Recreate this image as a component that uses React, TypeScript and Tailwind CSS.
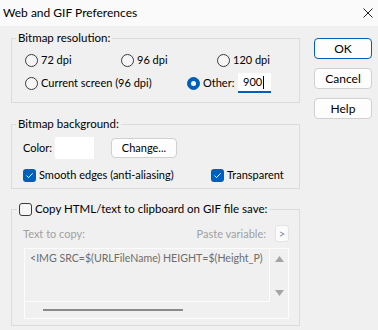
import React from "react";

function Radio({ checked }: { checked?: boolean }) {
  return (
    <span
      className={`w-[13px] h-[13px] shrink-0 rounded-full border flex items-center justify-center ${
        checked ? "bg-[#005fb8] border-[#005fb8]" : "border-[#3a3a3a] bg-[#f6f6f6]"
      }`}
    >
      {checked && <span className="w-[5px] h-[5px] rounded-full bg-white" />}
    </span>
  );
}

function Check({ checked }: { checked?: boolean }) {
  if (!checked)
    return <span className="w-[13px] h-[13px] shrink-0 rounded-[3px] border border-[#3a3a3a] bg-[#f6f6f6]" />;
  return (
    <span className="w-[13px] h-[13px] shrink-0 rounded-[3px] bg-[#005fb8] flex items-center justify-center">
      <svg width="9" height="9" viewBox="0 0 9 9">
        <path d="M1.5 4.6 L3.5 6.6 L7.6 2.3" stroke="white" strokeWidth="1" fill="none" />
      </svg>
    </span>
  );
}

function Btn({ label, def }: { label: string; def?: boolean }) {
  return (
    <div
      className={`w-[58px] h-[21px] rounded-[4px] bg-[#fdfdfd] border flex items-center justify-center text-[12px] ${
        def ? "border-[#005fb8]" : "border-[#d0d0d0]"
      }`}
    >
      {label}
    </div>
  );
}

export default function App() {
  return (
    <div className="w-[378px] h-[330px] overflow-hidden bg-[#f0f0f0] text-black font-['Lato',sans-serif] text-[11px] leading-[16px]">
      <div className="h-[26px] bg-[#fafafa] flex items-center justify-between pl-[3px] pr-[5px]">
        <span className="text-[12px]">Web and GIF Preferences</span>
        <svg width="10" height="10" viewBox="0 0 10 10">
          <path d="M0.5 0.5 L9.5 9.5 M9.5 0.5 L0.5 9.5" stroke="#222" strokeWidth="1" />
        </svg>
      </div>
      <div className="flex pl-[11px] pt-[4px]">
        <div className="w-[289px] flex flex-col">
          <fieldset className="border border-[#dcdcdc] p-0">
            <legend className="ml-[4px] px-[2px] leading-[16px] text-[11.5px]">Bitmap resolution:</legend>
            <div className="pl-[13px] pt-[4px] pb-[9px]">
              <div className="flex h-[20px] items-center">
                <div className="w-[96px] flex items-center gap-[3px]"><Radio />72 dpi</div>
                <div className="w-[96px] flex items-center gap-[3px]"><Radio />96 dpi</div>
                <div className="flex items-center gap-[3px]"><Radio />120 dpi</div>
              </div>
              <div className="flex h-[20px] items-center mt-[3px]">
                <div className="w-[162px] flex items-center gap-[3px]"><Radio />Current screen (96 dpi)</div>
                <div className="w-[51px] flex items-center gap-[3px]"><Radio checked />Other:</div>
                <div className="w-[33px] h-[20px] bg-white border-b-2 border-[#005fb8] flex items-center pl-[5px]">
                  900<span className="w-px h-[13px] bg-black ml-px" />
                </div>
              </div>
            </div>
          </fieldset>

          <fieldset className="mt-[13px] border border-[#dcdcdc] p-0">
            <legend className="ml-[4px] px-[2px] leading-[16px] text-[11.5px]">Bitmap background:</legend>
            <div className="pl-[11px] pt-[5px] pb-[5px]">
              <div className="flex items-center h-[22px]">
                <span className="w-[32px]">Color:</span>
                <div className="w-[39px] h-[22px] bg-white" />
                <div className="ml-[17px] w-[66px] h-[20px] rounded-[4px] bg-[#fdfdfd] border border-[#d0d0d0] flex items-center justify-center">
                  Change...
                </div>
              </div>
              <div className="flex items-center h-[16px] mt-[8px]">
                <div className="w-[188px] flex items-center gap-[3px]"><Check checked />Smooth edges (anti-aliasing)</div>
                <div className="flex items-center gap-[3px]"><Check checked />Transparent</div>
              </div>
            </div>
          </fieldset>

          <fieldset className="mt-[12px] border border-[#dcdcdc] p-0">
            <legend className="ml-[5px] px-[2px] leading-[16px] flex items-center gap-[3px] whitespace-nowrap text-[11.5px]">
              <Check />Copy HTML/text to clipboard on GIF file save:
            </legend>
            <div className="pl-[12px] pr-[10px] pt-[8px] pb-[6px]">
              <div className="flex items-center h-[17px] text-[#a0a0a0]">
                <span className="-ml-px">Text to copy:</span>
                <span className="ml-auto">Paste variable:</span>
                <div className="ml-[9px] w-[14px] h-[17px] rounded-[3px] bg-[#fbfbfb] border border-[#e3e3e3] flex items-center justify-center text-[#7d8aa8] text-[11px]">
                  &gt;
                </div>
              </div>
              <div className="mt-[6px] h-[71px] border border-[#fcfcfc] grid grid-cols-[1fr_18px] grid-rows-[53px_1fr]">
                <div className="border-r border-b border-[#fcfcfc] pl-[5px] pt-[1px] overflow-hidden whitespace-nowrap text-[#6d6d6d] text-[10.6px]">
                  {"<IMG SRC=$(URLFileName) HEIGHT=$(Height_P)"}
                </div>
                <div className="flex flex-col items-center justify-between pt-[7px] pb-[6px]">
                  <svg width="9" height="6" viewBox="0 0 9 6"><path d="M4.5 0 L9 6 L0 6 Z" fill="#a5a5a5" /></svg>
                  <svg width="9" height="6" viewBox="0 0 9 6"><path d="M0 0 L9 0 L4.5 6 Z" fill="#a5a5a5" /></svg>
                </div>
                <div className="flex items-center pl-[18px]">
                  <div className="w-[140px] h-[2px] bg-[#8a8a8a]" />
                </div>
                <div />
              </div>
            </div>
          </fieldset>
        </div>
        <div className="ml-[14px] pt-[8px] flex flex-col gap-[9px]">
          <Btn label="OK" def />
          <Btn label="Cancel" />
          <Btn label="Help" />
        </div>
      </div>
    </div>
  );
}
